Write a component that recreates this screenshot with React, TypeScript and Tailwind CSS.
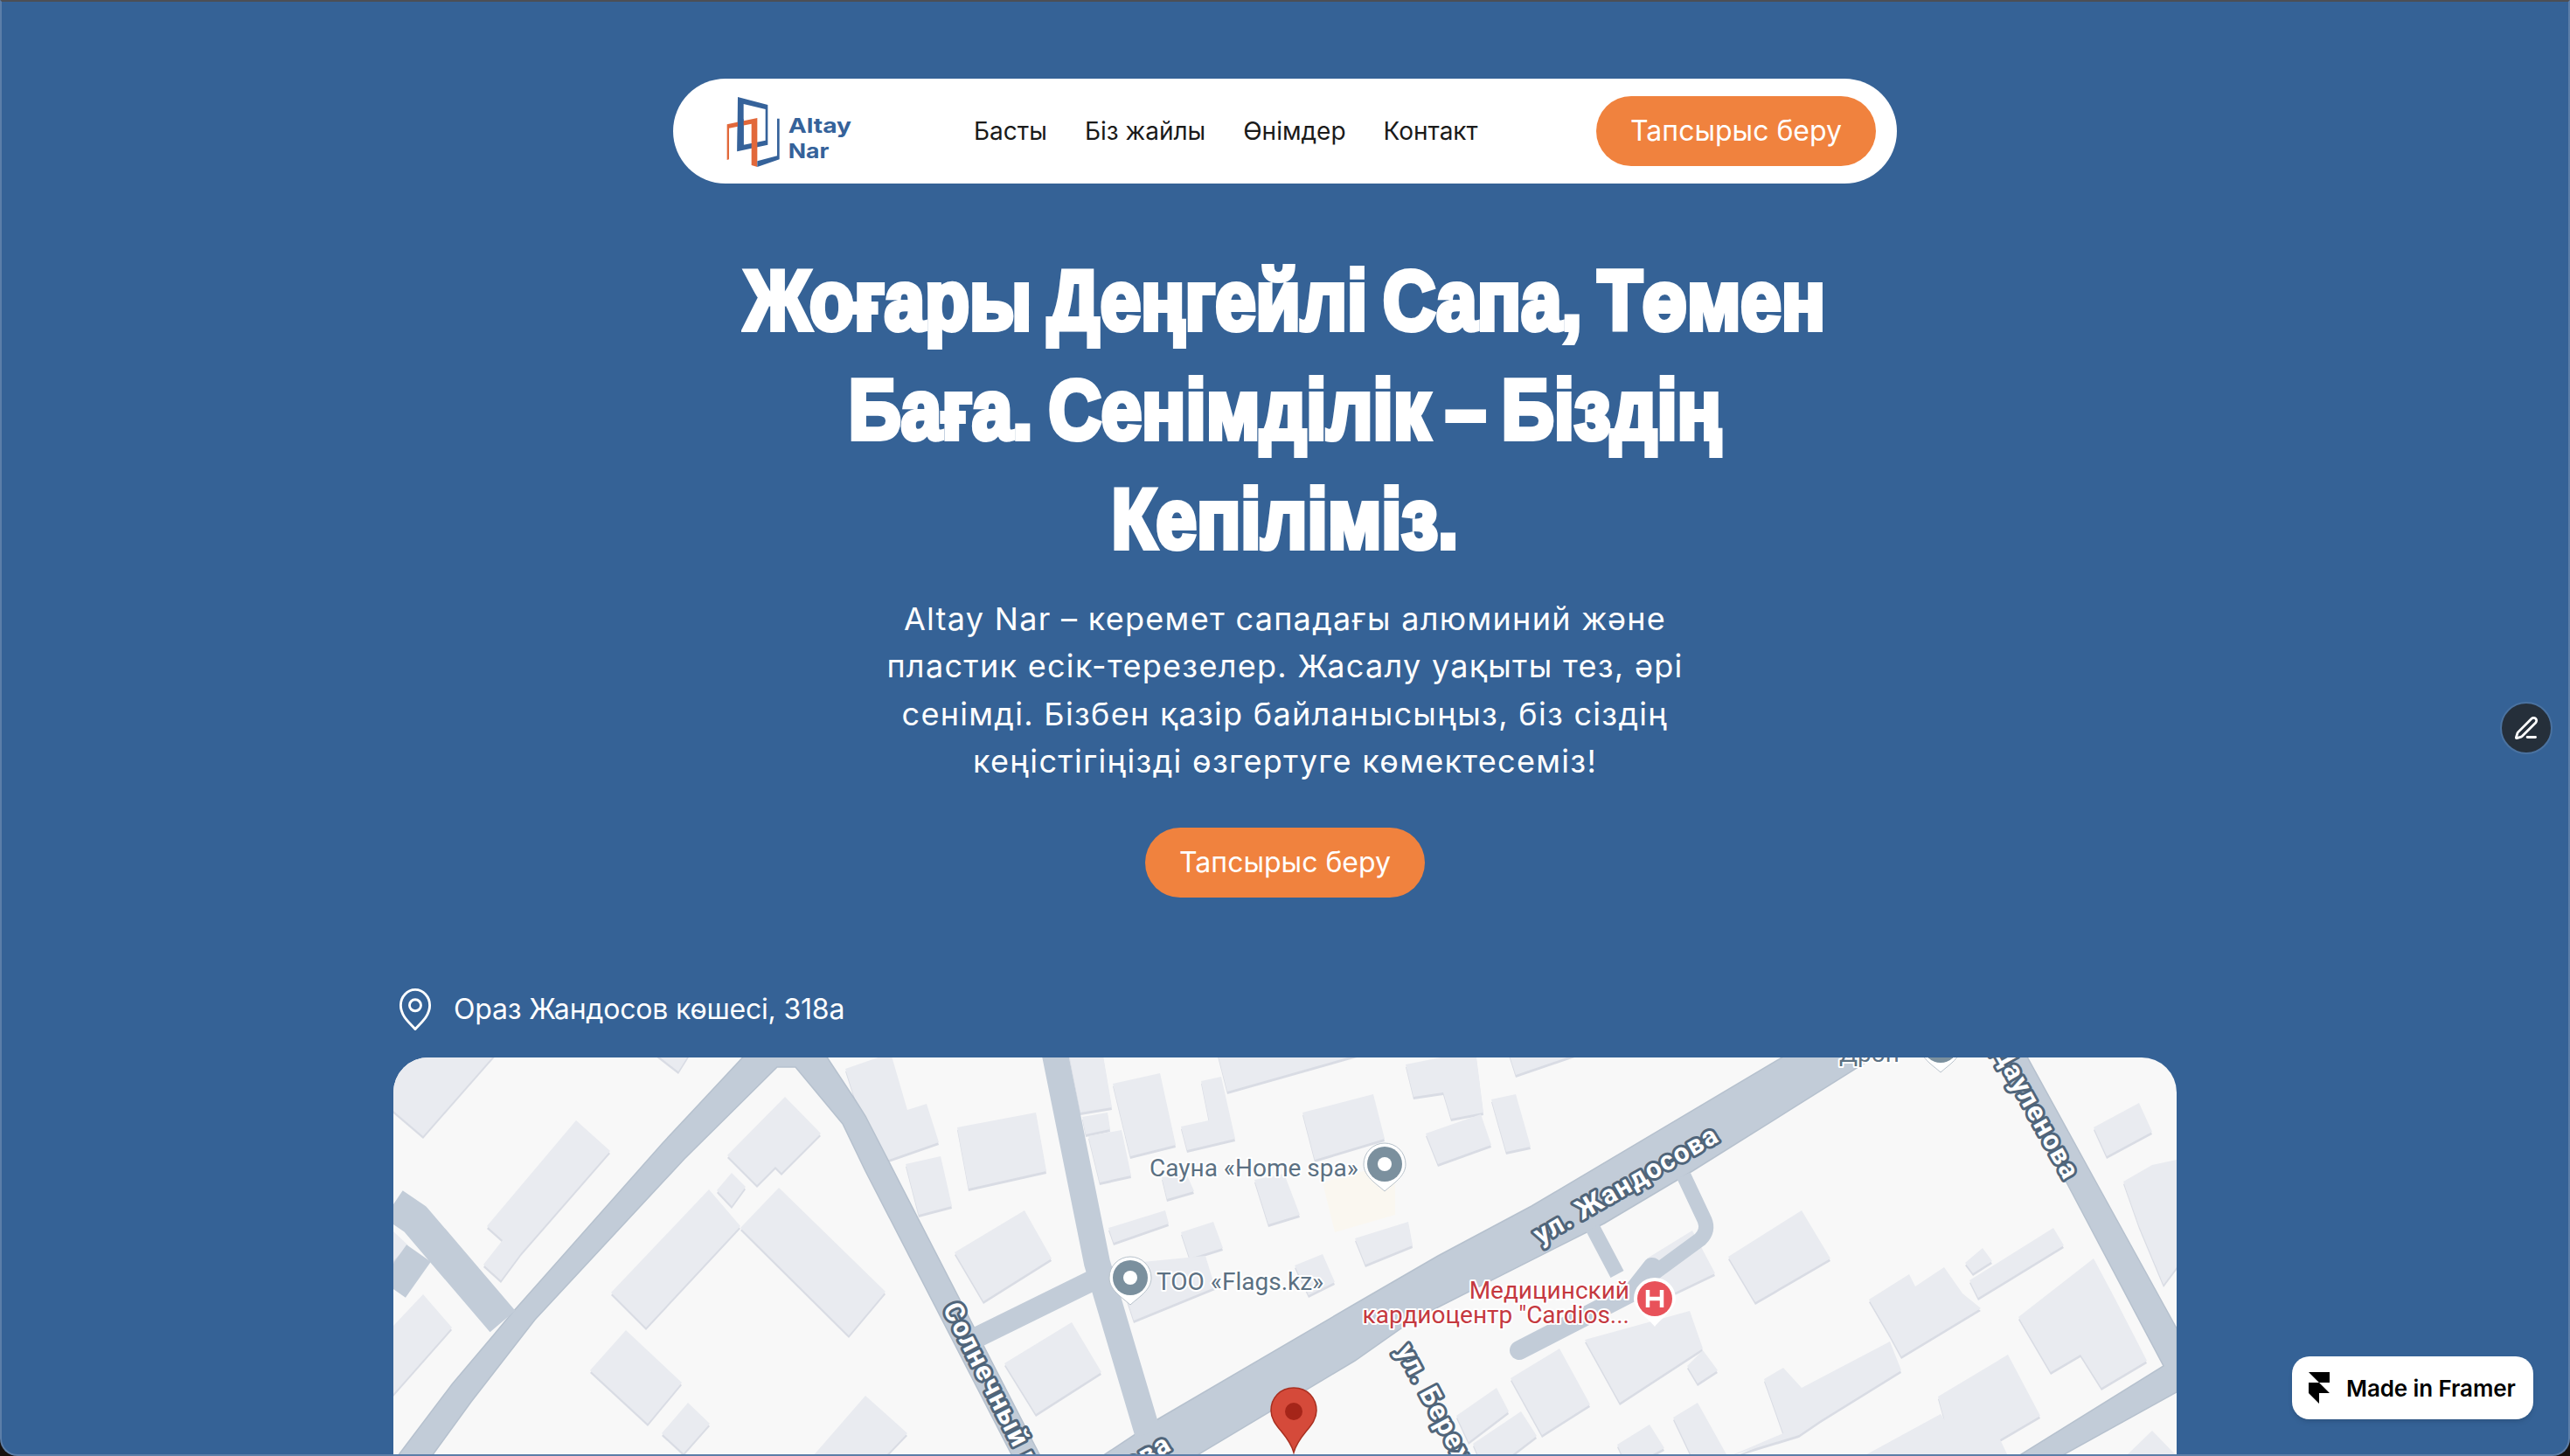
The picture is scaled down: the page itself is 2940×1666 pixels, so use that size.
import { PenLine } from "lucide-react";

const sans = "font-['Inter','Liberation_Sans',sans-serif]";

// building footprints, in page pixels
const buildings = [
  "450,1202 570,1202 484,1300 450,1271",
  "659,1282 698,1317 596,1434 573,1465 553,1447 575,1419 557,1403",
  "898,1255 939,1297 894,1342 887,1335 866,1356 832,1322",
  "837,1342 853,1358 837,1380 820,1362",
  "811,1361 847,1403 739,1519 699,1479",
  "891,1359 1013,1478 971,1528 847,1405",
  "716,1522 780,1582 741,1629 675,1568",
  "787,1605 812,1629 782,1663 757,1640",
  "484,1481 517,1519 450,1595 450,1517",
  "450,1409 467,1425 450,1443",
  "930,1666 990,1597 1038,1640 1013,1666",
  "745,1202 791,1202 776,1226",
  "967,1223 1019,1205 1038,1270 1060,1263 1074,1307 1008,1330 990,1283 982,1270",
  "1095,1290 1185,1273 1197,1340 1108,1360",
  "1036,1332 1076,1323 1089,1380 1051,1390",
  "1092,1433 1172,1385 1203,1440 1125,1489",
  "1149,1560 1226,1513 1260,1570 1185,1618",
  "1222,1202 1261,1202 1272,1267 1236,1273",
  "1238,1278 1267,1273 1270,1292 1242,1298",
  "1245,1300 1283,1293 1294,1345 1258,1353",
  "1273,1240 1327,1228 1345,1310 1293,1323",
  "1374,1237 1397,1232 1413,1303 1358,1316 1351,1289 1383,1282",
  "1392,1202 1570,1202 1404,1249",
  "1490,1273 1571,1252 1584,1303 1504,1327",
  "1329,1347 1358,1345 1366,1363 1335,1372",
  "1435,1350 1469,1343 1487,1390 1451,1401",
  "1268,1405 1333,1385 1337,1400 1274,1422",
  "1351,1410 1388,1398 1399,1428 1361,1440",
  "1276,1447 1379,1437 1390,1473 1297,1511",
  "1481,1448 1513,1435 1527,1467 1497,1482",
  "1608,1218 1688,1202 1697,1273 1660,1280 1651,1250 1617,1255",
  "1725,1202 1816,1202 1734,1230",
  "1706,1258 1734,1252 1751,1312 1723,1318",
  "1631,1297 1694,1275 1706,1310 1645,1332",
  "1550,1417 1611,1398 1616,1425 1562,1447",
  "1884,1440 1936,1408 1962,1457 1893,1490",
  "1977,1438 2061,1385 2094,1440 2008,1490",
  "1813,1533 1933,1500 1948,1543 1853,1605",
  "1728,1577 1784,1543 1819,1607 1764,1642",
  "1666,1620 1712,1588 1726,1615 1680,1650",
  "1685,1652 1740,1615 1758,1643 1728,1666 1691,1666",
  "1930,1563 1948,1545 1965,1568 1942,1583",
  "1914,1622 1942,1605 1976,1666 1935,1666",
  "1850,1653 1887,1630 1904,1657 1887,1666 1856,1666",
  "2018,1578 2040,1565 2061,1588 2162,1535 2175,1568 2083,1625 2058,1642 1979,1666 2040,1640",
  "2138,1487 2184,1458 2191,1472 2224,1450 2245,1480 2266,1497 2175,1552 2162,1528",
  "2253,1465 2349,1405 2361,1425 2263,1485",
  "2248,1445 2268,1428 2279,1443 2257,1457",
  "2395,1290 2447,1262 2462,1295 2410,1323",
  "2429,1352 2462,1333 2490,1327 2490,1450 2475,1470 2447,1403",
  "2309,1507 2395,1440 2420,1487 2456,1557 2404,1588 2380,1550 2346,1570",
  "2217,1598 2297,1550 2334,1620 2288,1647 2297,1666 2236,1666",
  "2132,1666 2220,1618 2254,1666",
  "2432,1666 2462,1637 2490,1666",
];

// filled road shapes
const roads = [
  "455,1666 517,1584 566,1526 586,1502 758,1308 857,1202 941,1202 976,1255 990,1277 1190,1666 1158,1666 990,1340 964,1286 910,1221 889,1221 783,1326 612,1510 539,1604 494,1666",
  "1261,1666 1326,1623 1550,1492 1645,1437 1752,1380 2052,1202 2156,1202 1936,1340 1835,1400 1617,1510 1550,1557 1368,1666",
  "2279,1202 2315,1202 2398,1353 2490,1520 2490,1593 2358,1666 2309,1666 2475,1563 2364,1353",
];

// stroked road shapes: [path, width]
const lanes: [string, number][] = [
  ["M450,1378 L475,1395 L575,1512", 38],
  ["M479,1434 L450,1475", 34],
  ["M1206,1202 L1255,1445 L1313,1640", 30],
  ["M1250,1465 L1118,1530", 24],
  ["M1926,1345 L1950,1396 Q1955,1408 1945,1418 L1885,1462", 17],
  ["M1822,1405 L1850,1458", 17],
];

function GreyPin({ x, y }: { x: number; y: number }) {
  return (
    <g transform={`translate(${x} ${y})`}>
      <path d="M-24,0 A24,24 0 1 1 24,0 C24,14 10,22 0,31 C-10,22 -24,14 -24,0 Z" fill="#ffffff" stroke="#b8c2cb" strokeWidth="1" />
      <circle r="20" fill="#7b909e" />
      <circle r="8" fill="#ffffff" />
    </g>
  );
}

function RoadLabel({ x, y, angle, anchor, children }: { x: number; y: number; angle: number; anchor?: "end"; children: string }) {
  return (
    <text
      transform={`translate(${x} ${y}) rotate(${angle})`}
      textAnchor={anchor}
      fontFamily="Roboto, sans-serif"
      fontWeight="700"
      fontSize="31"
      letterSpacing="1.5"
      fill="#ffffff"
      stroke="#50657a"
      strokeWidth="6"
      strokeLinejoin="round"
      paintOrder="stroke"
    >
      {children}
    </text>
  );
}

function PoiLabel({ x, y, fill, anchor, children }: { x: number; y: number; fill: string; anchor?: "end"; children: string }) {
  return (
    <text
      x={x}
      y={y}
      textAnchor={anchor}
      fontFamily="Roboto, sans-serif"
      fontSize="28"
      fill={fill}
      stroke="#ffffff"
      strokeWidth="4"
      strokeLinejoin="round"
      paintOrder="stroke"
    >
      {children}
    </text>
  );
}

function MapView() {
  return (
    <svg viewBox="450 1210 2040 456" className="block w-full h-full">
      <rect x="450" y="1210" width="2040" height="456" fill="#f8f8f8" />
      <polygon points="1513,1353 1596,1330 1596,1390 1527,1410" fill="#faf7f0" />
      {buildings.map((b) => (
        <g key={b}>
          <polygon points={b} fill="#d9dce4" transform="translate(0 3)" />
          <polygon points={b} fill="#e9ebf0" />
        </g>
      ))}
      {roads.map((r) => (
        <polygon key={r} points={r} fill="#c2ccd8" stroke="#b6c1ce" strokeWidth="1.5" />
      ))}
      {lanes.map(([d, w]) => (
        <path key={d} d={d} fill="none" stroke="#c2ccd8" strokeWidth={w} strokeLinejoin="round" />
      ))}
      <path d="M1738,1545 L1868,1478 L1890,1450" fill="none" stroke="#c2ccd8" strokeWidth="22" strokeLinecap="round" strokeLinejoin="round" />

      <RoadLabel x={1078} y={1497} angle={63}>Солнечный проезд</RoadLabel>
      <RoadLabel x={1342} y={1658} angle={-30} anchor="end">ул. Жандосова</RoadLabel>
      <RoadLabel x={1762} y={1424} angle={-30}>ул. Жандосова</RoadLabel>
      <RoadLabel x={1597} y={1545} angle={62}>ул. Бережинского</RoadLabel>
      <RoadLabel x={2362} y={1352} angle={61} anchor="end">ул. Дауленова</RoadLabel>

      <PoiLabel x={1315} y={1346} fill="#5b7082">Сауна «Home spa»</PoiLabel>
      <GreyPin x={1584} y={1332} />
      <PoiLabel x={1323} y={1476} fill="#5b7082">ТОО «Flags.kz»</PoiLabel>
      <GreyPin x={1293} y={1462} />
      <PoiLabel x={2104} y={1215} fill="#5b7082">Дрон</PoiLabel>
      <GreyPin x={2220} y={1196} />

      <PoiLabel x={1864} y={1486} fill="#c5393f" anchor="end">Медицинский</PoiLabel>
      <PoiLabel x={1864} y={1514} fill="#c5393f" anchor="end">{'кардиоцентр "Cardios...'}</PoiLabel>
      <g transform="translate(1893 1486)">
        <path d="M-24,0 A24,24 0 1 1 24,0 C24,12 8,22 0,32 C-8,22 -24,12 -24,0 Z" fill="#ffffff" />
        <circle r="20" fill="#e8525a" />
        <path d="M-8,-10 V10 M8,-10 V10 M-8,0 H8" stroke="#ffffff" strokeWidth="4.5" fill="none" />
      </g>

      <path
        d="M1480,1588 C1464,1588 1454,1600 1454,1614 C1454,1632 1474,1640 1480,1662 C1486,1640 1506,1632 1506,1614 C1506,1600 1496,1588 1480,1588 Z"
        fill="#d54a3a"
        stroke="#a92f20"
        strokeWidth="1.5"
      />
      <circle cx="1480" cy="1615" r="10" fill="#a52519" />
    </svg>
  );
}

function Logo() {
  return (
    <svg viewBox="0 0 570 330" className="w-[190px] h-[110px] shrink-0">
      <path fillRule="evenodd" fill="#35629a" d="M105,48 L208,75 V212 L103,235 Z M125,72 V212 L200,197 V90 Z" />
      <path fill="#e2683a" d="M68,142 L172,120 V288 L152,282 V140 L75,155 V262 L68,264 Z" />
      <path fill="#35629a" d="M105,128 L125,124 V212 L103,235 Z" />
      <path fill="#35629a" d="M172,268 L240,250 V122 L248,122 V262 L172,288 Z" />
      <text x="278" y="172" textLength="217" lengthAdjust="spacingAndGlyphs" fontFamily="Inter, sans-serif" fontWeight="700" fontSize="70" fill="#35629a">Altay</text>
      <text x="278" y="258" textLength="140" lengthAdjust="spacingAndGlyphs" fontFamily="Inter, sans-serif" fontWeight="700" fontSize="70" fill="#35629a">Nar</text>
    </svg>
  );
}

function OrderButton() {
  return (
    <a className={`flex items-center justify-center w-[320px] h-[80px] rounded-[40px] bg-[#f0823e] text-white text-[32px] ${sans}`}>
      Тапсырыс беру
    </a>
  );
}

export default function App() {
  return (
    <div className="h-[1666px] bg-[#171210] overflow-hidden">
      <main className="relative h-full flex flex-col items-center overflow-hidden rounded-b-[20px] border-2 border-[#5c7ea8] border-t-[#4c4f55] bg-[#356296]">
        {/* Nav */}
        <nav className="mt-[88px] flex items-center w-[1400px] h-[120px] shrink-0 pl-[39px] pr-[24px] rounded-[60px] bg-white">
          <Logo />
          <div className={`ml-[115px] flex items-center gap-[43px] text-[28px] text-[#1a1a1a] ${sans}`}>
            <a>Басты</a>
            <a>Біз жайлы</a>
            <a>Өнімдер</a>
            <a>Контакт</a>
          </div>
          <div className="ml-auto">
            <OrderButton />
          </div>
        </nav>

        {/* Hero */}
        <h1 className="mt-[71px] w-max text-center text-white text-[97px] leading-[125px] font-bold font-['Liberation_Sans',sans-serif] [word-spacing:-6px] [-webkit-text-stroke:6px_white] scale-x-[0.86]">
          Жоғары Деңгейлі Сапа, Төмен
          <br />
          Баға. Сенімділік – Біздің
          <br />
          Кепіліміз.
        </h1>
        <p className={`mt-[25px] text-center text-white text-[36px] leading-[54.4px] tracking-[1.3px] ${sans}`}>
          Altay Nar – керемет сападағы алюминий және
          <br />
          пластик есік-терезелер. Жасалу уақыты тез, әрі
          <br />
          сенімді. Бізбен қазір байланысыңыз, біз сіздің
          <br />
          кеңістігіңізді өзгертуге көмектесеміз!
        </p>
        <div className="mt-[48px]">
          <OrderButton />
        </div>

        {/* Address + map */}
        <div className="mt-[104px] w-[2040px] shrink-0">
          <div className={`flex items-center gap-[25px] h-[48px] pl-[6px] text-white text-[32px] tracking-[-0.2px] ${sans}`}>
            <svg viewBox="0 0 32 42" className="w-[38px] h-[50px] shrink-0" fill="none" stroke="#ffffff" strokeWidth="2.4">
              <path d="M16,40 C12,35 2,28 2,17 A14,15 0 0 1 30,17 C30,28 20,35 16,40 Z" strokeLinejoin="round" />
              <circle cx="16" cy="17" r="5.5" />
            </svg>
            <span>Ораз Жандосов көшесі, 318а</span>
          </div>
          <div className="mt-[31.4px] h-[456px] rounded-t-[40px] overflow-hidden">
            <MapView />
          </div>
        </div>

        {/* Floating controls */}
        <button className="absolute right-[18px] top-[801px] flex items-center justify-center w-[60px] h-[60px] rounded-full bg-[#252f3a] border-2 border-[#4a72a0] text-white">
          <PenLine size={28} strokeWidth={2.4} />
        </button>
        <div className="absolute right-[40px] bottom-[40px] flex items-center gap-[19px] w-[276px] h-[72px] pl-[19px] rounded-[20px] bg-white shadow-md">
          <svg viewBox="0 0 24 36" className="w-[24px] h-[36px]" fill="#000000">
            <path d="M0 0h24v12H12L0 0zm0 12h12l12 12H12v12L0 24V12z" />
          </svg>
          <span className={`text-[26px] font-semibold text-black tracking-[-0.1px] ${sans}`}>Made in Framer</span>
        </div>
      </main>
    </div>
  );
}
